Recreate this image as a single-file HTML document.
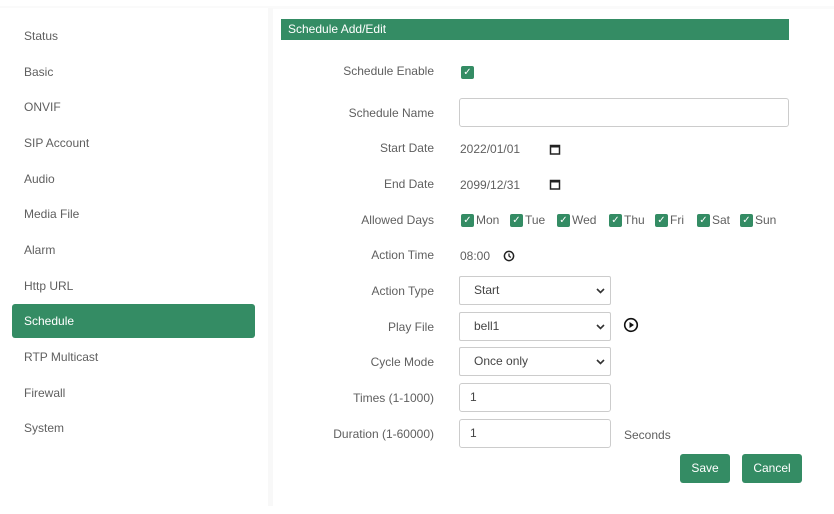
<!DOCTYPE html>
<html><head><meta charset="utf-8"><style>
*{box-sizing:border-box;margin:0;padding:0}
body{width:834px;height:514px;background:#fff;font-family:"Liberation Sans",sans-serif;font-size:12px;color:#5f5f5f;position:relative;overflow:hidden}
.side{position:absolute;left:0;top:8px;width:268px;height:498px;background:#fff}
.strip{position:absolute;left:268px;top:8px;width:5px;height:498px;background:#f8f8f8}
.top{position:absolute;left:0;top:6px;width:834px;height:3px;background:#fafafa}
.nav{position:absolute;left:24px;font-size:12px;color:#5f5f5f}
.act{position:absolute;left:12px;top:304px;width:243px;height:34px;background:#348c64;border-radius:3px}
.hdr{position:absolute;left:281px;top:19px;width:508px;height:21px;background:#348c64;color:#fff;padding-left:7px;line-height:21px;font-size:12px}
.lbl{position:absolute;right:400px;text-align:right;white-space:nowrap}
.a{position:absolute;white-space:nowrap}
.cb{position:absolute;width:13px;height:13px;background:#348c64;border-radius:2px;color:#fff;font-size:10px;line-height:13px;text-align:center}
.inp{position:absolute;border:1px solid #ccc;border-radius:3px;background:#fff;padding-left:10px;color:#444}
.sel{position:absolute;border:1px solid #ccc;border-radius:2px;background:#fff;padding-left:14px;color:#444}
.sel svg{position:absolute;right:5px;top:11px}
.btn{position:absolute;background:#348c64;color:#fff;border-radius:3px;text-align:center;line-height:29px;font-size:12px}
</style></head><body>
<div class="top"></div><div class="side"></div><div class="strip"></div>
<div class="act"></div>
<div class="nav" style="top:29px">Status</div>
<div class="nav" style="top:65px">Basic</div>
<div class="nav" style="top:100px">ONVIF</div>
<div class="nav" style="top:136px">SIP Account</div>
<div class="nav" style="top:172px">Audio</div>
<div class="nav" style="top:207px">Media File</div>
<div class="nav" style="top:243px">Alarm</div>
<div class="nav" style="top:279px">Http URL</div>
<div class="nav" style="top:314px;color:#fff">Schedule</div>
<div class="nav" style="top:350px">RTP Multicast</div>
<div class="nav" style="top:386px">Firewall</div>
<div class="nav" style="top:421px">System</div>

<div class="hdr">Schedule Add/Edit</div>

<div class="lbl" style="top:64px">Schedule Enable</div>
<div class="cb" style="left:461px;top:66px">✓</div>

<div class="lbl" style="top:106px">Schedule Name</div>
<div class="inp" style="left:459px;top:98px;width:330px;height:29px"></div>

<div class="lbl" style="top:141px">Start Date</div>
<div class="a" style="left:460px;top:142px">2022/01/01</div>
<svg style="position:absolute;left:549px;top:143px" width="12" height="12" viewBox="0 0 12 12"><rect x="1.5" y="2.5" width="9" height="8.5" fill="none" stroke="#222" stroke-width="1.5"/><rect x="1" y="2" width="10" height="2.5" fill="#222"/></svg>

<div class="lbl" style="top:177px">End Date</div>
<div class="a" style="left:460px;top:178px">2099/12/31</div>
<svg style="position:absolute;left:549px;top:178px" width="12" height="12" viewBox="0 0 12 12"><rect x="1.5" y="2.5" width="9" height="8.5" fill="none" stroke="#222" stroke-width="1.5"/><rect x="1" y="2" width="10" height="2.5" fill="#222"/></svg>

<div class="lbl" style="top:213px">Allowed Days</div>
<div class="cb" style="left:461px;top:214px">✓</div><div class="a" style="left:476px;top:213px">Mon</div>
<div class="cb" style="left:510px;top:214px">✓</div><div class="a" style="left:525px;top:213px">Tue</div>
<div class="cb" style="left:557px;top:214px">✓</div><div class="a" style="left:572px;top:213px">Wed</div>
<div class="cb" style="left:609px;top:214px">✓</div><div class="a" style="left:624px;top:213px">Thu</div>
<div class="cb" style="left:655px;top:214px">✓</div><div class="a" style="left:670px;top:213px">Fri</div>
<div class="cb" style="left:697px;top:214px">✓</div><div class="a" style="left:712px;top:213px">Sat</div>
<div class="cb" style="left:740px;top:214px">✓</div><div class="a" style="left:755px;top:213px">Sun</div>

<div class="lbl" style="top:248px">Action Time</div>
<div class="a" style="left:460px;top:249px">08:00</div>
<svg style="position:absolute;left:503px;top:250px" width="12" height="12" viewBox="0 0 12 12"><circle cx="6" cy="6" r="4.6" fill="none" stroke="#222" stroke-width="1.5"/><path d="M6 3.5V6l1.8 1.5" fill="none" stroke="#222" stroke-width="1.3"/></svg>

<div class="lbl" style="top:284px">Action Type</div>
<div class="sel" style="left:459px;top:276px;width:152px;height:29px;line-height:27px">Start<svg width="9" height="6" viewBox="0 0 9 6"><path d="M1 1l3.5 3.5L8 1" fill="none" stroke="#333" stroke-width="1.6"/></svg></div>

<div class="lbl" style="top:320px">Play File</div>
<div class="sel" style="left:459px;top:312px;width:152px;height:29px;line-height:27px">bell1<svg width="9" height="6" viewBox="0 0 9 6"><path d="M1 1l3.5 3.5L8 1" fill="none" stroke="#333" stroke-width="1.6"/></svg></div>
<svg style="position:absolute;left:623px;top:317px" width="16" height="16" viewBox="0 0 16 16"><circle cx="8" cy="8" r="6.3" fill="none" stroke="#111" stroke-width="1.6"/><path d="M6.5 5v6l4.5-3z" fill="#111"/></svg>

<div class="lbl" style="top:355px">Cycle Mode</div>
<div class="sel" style="left:459px;top:347px;width:152px;height:29px;line-height:27px">Once only<svg width="9" height="6" viewBox="0 0 9 6"><path d="M1 1l3.5 3.5L8 1" fill="none" stroke="#333" stroke-width="1.6"/></svg></div>

<div class="lbl" style="top:391px">Times (1-1000)</div>
<div class="inp" style="left:459px;top:383px;width:152px;height:29px;line-height:27px">1</div>

<div class="lbl" style="top:427px">Duration (1-60000)</div>
<div class="inp" style="left:459px;top:419px;width:152px;height:29px;line-height:27px">1</div>
<div class="a" style="left:624px;top:428px">Seconds</div>

<div class="btn" style="left:680px;top:454px;width:50px">Save</div>
<div class="btn" style="left:742px;top:454px;width:60px">Cancel</div>
</body></html>
